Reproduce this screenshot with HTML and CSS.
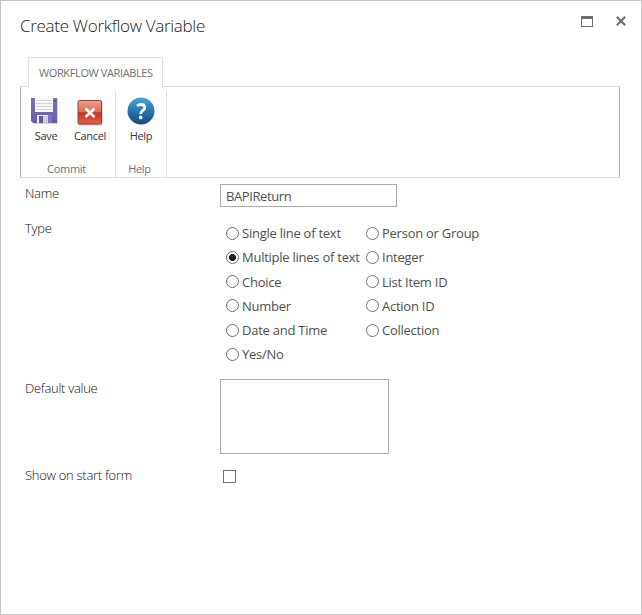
FILE: index.html
```html
<!DOCTYPE html>
<html lang="en">
<head>
<meta charset="utf-8">
<title>Create Workflow Variable</title>
<link rel="stylesheet" href="styles.css">
</head>
<body>
<main class="dialog">
  <header class="titlebar">
    <h1>Create Workflow Variable</h1>
    <div class="window-buttons">
      <svg width="12" height="11" viewBox="0 0 12 11" shape-rendering="crispEdges"><path d="M0 0h12v11H0zM1 3v7h10V3z" fill="#6e6e6e" fill-rule="evenodd"/></svg>
      <svg width="10" height="10" viewBox="0 0 10 10"><path d="M.8.8l8.4 8.4M9.2.8L.8 9.2" stroke="#6e6e6e" stroke-width="2.1"/></svg>
    </div>
  </header>
  <nav class="tabs"><span class="tab">WORKFLOW VARIABLES</span></nav>
  <section class="ribbon">
    <div class="group commit">
      <div class="actions">
        <div class="action save">
          <svg width="28" height="28" viewBox="0 0 28 28">
            <defs><linearGradient id="disk" x2="0" y2="1"><stop stop-color="#7d70bb"/><stop offset="1" stop-color="#6c5bae"/></linearGradient></defs>
            <path d="M2 3h25v25H3z" fill="#d4d2dc"/>
            <path d="M0 2h26v25H2l-2-2z" fill="url(#disk)"/>
            <path d="M4 2h18v14H4z" fill="#f7f7f7"/>
            <path d="M5 4.500h16M5 7.500h16M5 10.500h16M5 13.500h16" stroke="#d5d5d5"/>
            <path d="M23.500 4h1v2h-1z" fill="#3d3175"/>
            <path d="M6 19h15v8H6z" fill="#eceaf2"/>
            <path d="M8 20h4v7H8z" fill="#6656a7"/>
            <path d="M12 20h5v7h-5z" fill="#d0cfd4"/>
            <path d="M17 19h4v8h-4z" fill="#8175b9"/>
          </svg>
          <span>Save</span>
        </div>
        <div class="action cancel">
          <svg width="26" height="26" viewBox="0 0 26 26">
            <defs><linearGradient id="red" x2="0" y2="1"><stop stop-color="#efa193"/><stop offset=".48" stop-color="#dc6b58"/><stop offset=".52" stop-color="#c5341f"/><stop offset="1" stop-color="#e0604b"/></linearGradient></defs>
            <rect x="1" y="1" width="24.500" height="24.500" rx="1.500" fill="#c9bcb9"/>
            <rect x="1" y=".5" width="23.500" height="23.500" rx="1.500" fill="url(#red)" stroke="#944338"/>
            <path d="M8.500 8.500l9 8.500M17.500 8.500l-9 8.500" stroke="#fff" stroke-width="2.500"/>
          </svg>
          <span>Cancel</span>
        </div>
      </div>
      <div class="group-name">Commit</div>
    </div>
    <div class="group help">
      <div class="actions">
        <div class="action">
          <svg width="28" height="28" viewBox="0 0 28 28">
            <defs><linearGradient id="blue" x2="0" y2="1"><stop stop-color="#45a9d5"/><stop offset=".5" stop-color="#2777ae"/><stop offset="1" stop-color="#20437e"/></linearGradient></defs>
            <circle cx="14" cy="14" r="13.500" fill="url(#blue)"/>
            <path d="M10 8.900c1.400-1 2.700-1.400 4.100-1.400 2.300 0 3.600 1.200 3.600 2.900 0 3.200-4 3-4 6.600" fill="none" stroke="#fff" stroke-width="2.800"/>
            <circle cx="13.700" cy="20.400" r="1.850" fill="#fff"/>
          </svg>
          <span>Help</span>
        </div>
      </div>
      <div class="group-name">Help</div>
    </div>
  </section>
  <form class="form">
    <div class="row name-row">
      <label for="name">Name</label>
      <input class="text" id="name" type="text" value="BAPIReturn" spellcheck="false">
    </div>
    <div class="row type-row">
      <span>Type</span>
      <div class="options">
        <label><input type="radio" name="type"><span>Single line of text</span></label>
        <label><input type="radio" name="type" checked><span>Multiple lines of text</span></label>
        <label><input type="radio" name="type"><span>Choice</span></label>
        <label><input type="radio" name="type"><span>Number</span></label>
        <label><input type="radio" name="type"><span>Date and Time</span></label>
        <label><input type="radio" name="type"><span>Yes/No</span></label>
        <label><input type="radio" name="type"><span>Person or Group</span></label>
        <label><input type="radio" name="type"><span>Integer</span></label>
        <label><input type="radio" name="type"><span>List Item ID</span></label>
        <label><input type="radio" name="type"><span>Action ID</span></label>
        <label><input type="radio" name="type"><span>Collection</span></label>
      </div>
    </div>
    <div class="row default-row">
      <label for="default">Default value</label>
      <textarea id="default"></textarea>
    </div>
    <div class="row">
      <label for="show">Show on start form</label>
      <input class="check" id="show" type="checkbox">
    </div>
  </form>
</main>
</body>
</html>
```
FILE: styles.css
```css
* { box-sizing: border-box; }
body { margin: 0; background: #fff; color: #505050; font: 400 13px/18px "Open Sans", "Noto Sans", sans-serif; letter-spacing: -.25px; }
.dialog { width: 642px; height: 615px; border: 1px solid #c6c6c6; padding: 0 21px 0 19px; overflow: hidden; }
.titlebar { height: 56px; display: flex; justify-content: space-between; }
h1 { margin: 13px 0 0; font-size: 17px; line-height: 24px; font-weight: 300; letter-spacing: -.3px; color: #222; white-space: nowrap; }
.window-buttons { display: flex; gap: 23px; padding: 15px 0 0; margin-right: -6px; }
.window-buttons svg { display: block; }
.tabs { height: 30px; padding-left: 8px; display: flex; }
.tab { width: 135px; height: 31px; border: 1px solid #e1e1e1; border-bottom: 0; background: #fff; padding: 6px 0 0 10px; font-size: 11px; color: #707070; white-space: nowrap; letter-spacing: -.38px; z-index: 1; }
.ribbon { width: 600px; height: 92px; display: flex; border: 1px solid #e1e1e1; border-left-color: #b4b4b4; border-right-color: #b4b4b4; }
.group { margin-top: 4px; border-right: 1px solid #e1e1e1; display: flex; flex-direction: column; justify-content: space-between; font-size: 11px; letter-spacing: -.3px; }
.ribbon { margin-top: -1px; }
.commit { width: 95px; }
.help { width: 51px; }
.actions { display: flex; padding-top: 5px; }
.action { display: flex; flex-direction: column; align-items: center; color: #333; }
.action svg { display: block; height: 28px; }
.action span { line-height: 16px; margin-top: 4px; }
.save { width: 50px; }
.save svg { margin-left: -2px; }
.cancel { width: 38px; }
.cancel svg { height: 26px; margin: 4px 0 -2px; }
.help .action { width: 51px; }
.help .action svg { margin: 1px 0 -1px; }
.group-name { text-align: center; line-height: 16px; color: #707070; padding-right: 3px; }
.form { padding-left: 5px; }
.row { display: grid; grid-template-columns: 195px 1fr; align-items: start; }
.row > :first-child { font-weight: 300; color: #111; letter-spacing: -.28px; }
.name-row { height: 42px; padding-top: 6px; }
.type-row { height: 159px; }
.type-row > :first-child { margin-top: -1px; }
.text { width: 177px; height: 23px; border: 1px solid #ababab; padding: 1px 5px 0; font: inherit; letter-spacing: -.4px; color: #505050; outline: 0; }
.options { display: grid; grid-template: repeat(6, 24.250px) / 140px 120px; grid-auto-flow: column; padding-left: 6px; margin-top: 1px; }
.options label { display: flex; align-items: center; white-space: nowrap; }
.options input { appearance: none; width: 13px; height: 13px; border: 1px solid #707070; border-radius: 50%; margin: 0 3px 0 0; }
.options input:checked { background: radial-gradient(circle, #222 0 3.200px, #fff 3.800px); }
textarea { width: 169px; height: 75px; border: 1px solid #ababab; resize: none; display: block; }
.default-row { height: 87px; }
.check { appearance: none; width: 13px; height: 13px; border: 1px solid #707070; margin: 4px 0 0 3px; }
```
